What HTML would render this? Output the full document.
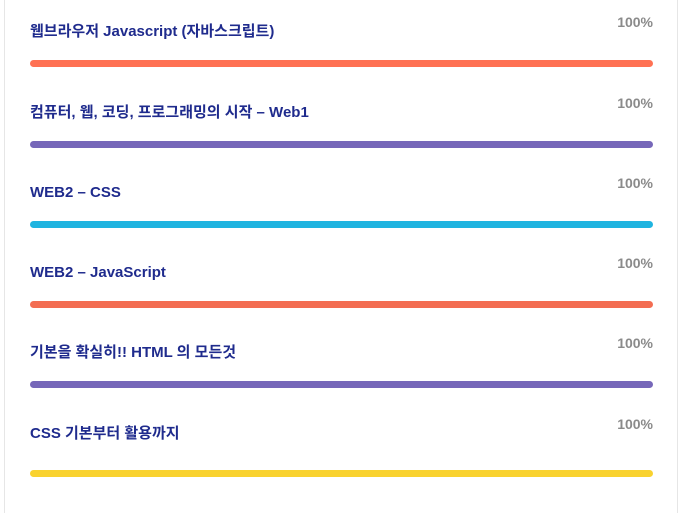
<!DOCTYPE html>
<html><head><meta charset="utf-8"><style>
html,body{margin:0;padding:0;background:#fff;width:679px;height:513px;overflow:hidden}
.wrap{position:absolute;left:4px;top:0;width:672px;height:513px;border-left:1px solid #e6e6e6;border-right:1px solid #e6e6e6}
.row{position:absolute;left:0;width:672px;height:80px}
.t{position:absolute;left:25px;top:22px;line-height:20px;height:20px;font:bold 15px/20px "Liberation Sans","Noto Sans CJK KR",sans-serif;color:#1f2b8d;white-space:nowrap;letter-spacing:0}
.p{position:absolute;right:24px;top:14px;font:bold 14px "Liberation Sans",sans-serif;color:#8a8a8a}
.b{position:absolute;left:25px;top:60px;width:623px;height:7px;border-radius:4px}
</style></head><body><div class="wrap">
<div class="row" style="top:0"><div class="t">웹브라우저 Javascript (자바스크립트)</div><div class="p">100%</div><div class="b" style="background:#ff7153"></div></div>
<div class="row" style="top:81px"><div class="t">컴퓨터, 웹, 코딩, 프로그래밍의 시작 – Web1</div><div class="p">100%</div><div class="b" style="background:#7667b9"></div></div>
<div class="row" style="top:161px"><div class="t" style="top:22px">WEB2 – CSS</div><div class="p">100%</div><div class="b" style="background:#1fb4e0"></div></div>
<div class="row" style="top:241px"><div class="t" style="top:22px">WEB2 – JavaScript</div><div class="p">100%</div><div class="b" style="background:#f36d52"></div></div>
<div class="row" style="top:321px"><div class="t">기본을 확실히!! HTML 의 모든것</div><div class="p">100%</div><div class="b" style="background:#7667b9"></div></div>
<div class="row" style="top:402px"><div class="t">CSS 기본부터 활용까지</div><div class="p">100%</div><div class="b" style="background:#f9d22f;top:68px"></div></div>
</div></body></html>
